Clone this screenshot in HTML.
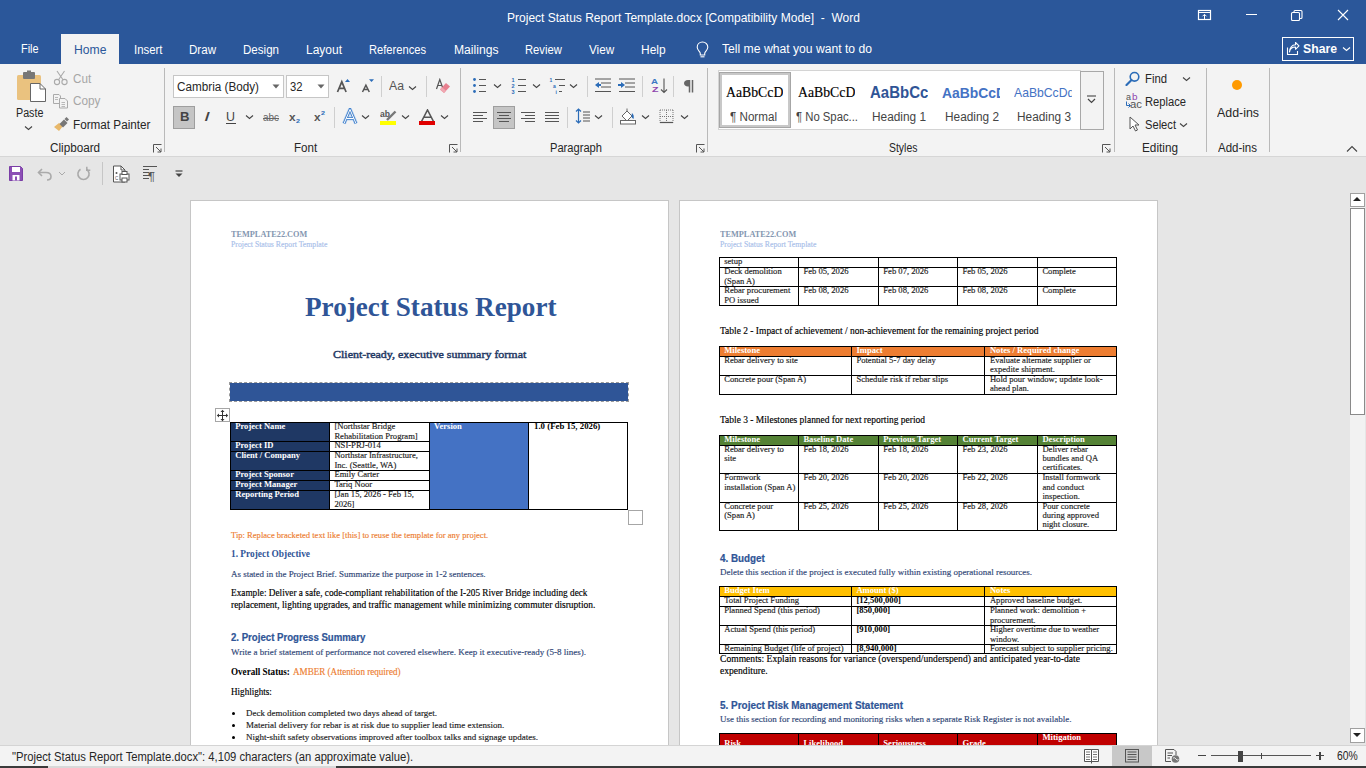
<!DOCTYPE html>
<html><head><meta charset="utf-8"><style>
html,body{margin:0;padding:0;width:1366px;height:768px;overflow:hidden;background:#e6e6e6;}
.t{position:absolute;white-space:nowrap;line-height:1;transform-origin:0 0;}
.r{position:absolute;}
</style></head><body>
<div class="r" style="left:0.00px;top:0.00px;width:1366.00px;height:64.00px;background:#2b579a;"></div>
<div class="t" id="t1" style="left:507.00px;top:11.72px;font-size:12.50px;font-family:'Liberation Sans', sans-serif;color:#ffffff;transform:scaleX(0.9617);">Project Status Report Template.docx [Compatibility Mode]&nbsp; -&nbsp; Word</div>
<svg class="r" style="left:1196.00px;top:8.00px;" width="17" height="14" viewBox="0 0 17 14"><rect x="2.5" y="2.5" width="12" height="9" fill="none" stroke="#fff" stroke-width="1.2"/><line x1="2.5" y1="4.5" x2="14.5" y2="4.5" stroke="#fff" stroke-width="1"/><path d="M8.5 11 V6.5 M6.5 8.3 L8.5 6.3 L10.5 8.3" fill="none" stroke="#fff" stroke-width="1"/></svg>
<div class="r" style="left:1246.00px;top:14.00px;width:10.50px;height:1.20px;background:#fff;"></div>
<svg class="r" style="left:1290.00px;top:9.00px;" width="14" height="13" viewBox="0 0 14 13"><rect x="1.5" y="3.5" width="8" height="8" fill="none" stroke="#fff" stroke-width="1.1" rx="1"/><path d="M4 3.5 V2.5 Q4 1.5 5 1.5 H11 Q12 1.5 12 2.5 V8.5 Q12 9.5 11 9.5 H9.5" fill="none" stroke="#fff" stroke-width="1.1"/></svg>
<svg class="r" style="left:1336.00px;top:8.00px;" width="14" height="14" viewBox="0 0 14 14"><path d="M2 2 L12 12 M12 2 L2 12" stroke="#fff" stroke-width="1.1"/></svg>
<div class="r" style="left:61.00px;top:34.00px;width:58.00px;height:30.00px;background:#f3f3f3;"></div>
<div class="t" id="t2" style="left:20.50px;top:42.62px;font-size:12.50px;font-family:'Liberation Sans', sans-serif;color:#ffffff;transform:scaleX(0.8732);">File</div>
<div class="t" id="t3" style="left:73.60px;top:43.52px;font-size:12.50px;font-family:'Liberation Sans', sans-serif;color:#2b579a;transform:scaleX(0.9717);">Home</div>
<div class="t" id="t4" style="left:133.50px;top:43.52px;font-size:12.50px;font-family:'Liberation Sans', sans-serif;color:#ffffff;transform:scaleX(0.9115);">Insert</div>
<div class="t" id="t5" style="left:189.00px;top:43.52px;font-size:12.50px;font-family:'Liberation Sans', sans-serif;color:#ffffff;transform:scaleX(0.9255);">Draw</div>
<div class="t" id="t6" style="left:243.00px;top:43.52px;font-size:12.50px;font-family:'Liberation Sans', sans-serif;color:#ffffff;transform:scaleX(0.9249);">Design</div>
<div class="t" id="t7" style="left:306.00px;top:43.52px;font-size:12.50px;font-family:'Liberation Sans', sans-serif;color:#ffffff;transform:scaleX(0.9592);">Layout</div>
<div class="t" id="t8" style="left:369.00px;top:43.52px;font-size:12.50px;font-family:'Liberation Sans', sans-serif;color:#ffffff;transform:scaleX(0.8915);">References</div>
<div class="t" id="t9" style="left:453.50px;top:43.52px;font-size:12.50px;font-family:'Liberation Sans', sans-serif;color:#ffffff;transform:scaleX(0.9704);">Mailings</div>
<div class="t" id="t10" style="left:525.20px;top:43.52px;font-size:12.50px;font-family:'Liberation Sans', sans-serif;color:#ffffff;transform:scaleX(0.8976);">Review</div>
<div class="t" id="t11" style="left:588.80px;top:43.52px;font-size:12.50px;font-family:'Liberation Sans', sans-serif;color:#ffffff;transform:scaleX(0.9377);">View</div>
<div class="t" id="t12" style="left:641.00px;top:43.52px;font-size:12.50px;font-family:'Liberation Sans', sans-serif;color:#ffffff;transform:scaleX(0.9565);">Help</div>
<svg class="r" style="left:694.00px;top:40.00px;" width="17" height="19" viewBox="0 0 17 19"><path d="M8.5 2 C5.2 2 3.2 4.5 3.2 7.2 C3.2 9.3 4.6 10.6 5.6 11.8 C6.1 12.4 6.3 13 6.3 13.8 V15 H10.7 V13.8 C10.7 13 10.9 12.4 11.4 11.8 C12.4 10.6 13.8 9.3 13.8 7.2 C13.8 4.5 11.8 2 8.5 2 Z" fill="none" stroke="#fff" stroke-width="1.1"/><path d="M6.5 16.8 H10.5" stroke="#fff" stroke-width="1.1"/></svg>
<div class="t" id="t13" style="left:722.00px;top:43.22px;font-size:12.50px;font-family:'Liberation Sans', sans-serif;color:#ffffff;transform:scaleX(0.9724);">Tell me what you want to do</div>
<div class="r" style="left:1282.00px;top:37.00px;width:72.00px;height:24.00px;border:1.3px solid #fff;box-sizing:border-box;"></div>
<svg class="r" style="left:1285.00px;top:41.00px;" width="16" height="16" viewBox="0 0 16 16"><path d="M2.5 6.5 V13.5 H12.5 V10" fill="none" stroke="#fff" stroke-width="1.1"/><path d="M4.5 11 C5 7.5 7.5 6 10.5 6 V8.3 L14 4.8 L10.5 1.5 V3.7 C7 3.9 4.8 6.5 4.5 11 Z" fill="none" stroke="#fff" stroke-width="1.1" stroke-linejoin="round"/></svg>
<div class="t" id="t14" style="left:1303.00px;top:43.16px;font-size:12.80px;font-family:'Liberation Sans', sans-serif;color:#ffffff;font-weight:700;transform:scaleX(0.9556);">Share</div>
<svg class="r" style="left:1342.00px;top:46.00px;" width="9" height="6" viewBox="0 0 9 6"><path d="M1 1.5 L4.5 4.5 L8 1.5" fill="none" stroke="#fff" stroke-width="1.1"/></svg>
<div class="r" style="left:0.00px;top:64.00px;width:1366.00px;height:92.00px;background:#f3f3f3;"></div>
<div class="r" style="left:0.00px;top:156.00px;width:1366.00px;height:1.00px;background:#d6d6d6;"></div>
<div class="r" style="left:164.20px;top:68.00px;width:1.00px;height:84.00px;background:#b9b9b9;"></div>
<div class="r" style="left:460.10px;top:68.00px;width:1.00px;height:84.00px;background:#b9b9b9;"></div>
<div class="r" style="left:707.00px;top:68.00px;width:1.00px;height:84.00px;background:#b9b9b9;"></div>
<div class="r" style="left:1114.10px;top:68.00px;width:1.00px;height:84.00px;background:#b9b9b9;"></div>
<div class="r" style="left:1206.10px;top:68.00px;width:1.00px;height:84.00px;background:#b9b9b9;"></div>
<div class="r" style="left:1268.90px;top:68.00px;width:1.00px;height:84.00px;background:#b9b9b9;"></div>
<div class="t" id="t15" style="left:49.50px;top:141.64px;font-size:12.00px;font-family:'Liberation Sans', sans-serif;color:#262626;transform:scaleX(0.9752);">Clipboard</div>
<div class="t" id="t16" style="left:293.75px;top:141.64px;font-size:12.00px;font-family:'Liberation Sans', sans-serif;color:#262626;transform:scaleX(0.9660);">Font</div>
<div class="t" id="t17" style="left:550.40px;top:141.64px;font-size:12.00px;font-family:'Liberation Sans', sans-serif;color:#262626;transform:scaleX(0.9278);">Paragraph</div>
<div class="t" id="t18" style="left:889.00px;top:141.64px;font-size:12.00px;font-family:'Liberation Sans', sans-serif;color:#262626;transform:scaleX(0.8688);">Styles</div>
<div class="t" id="t19" style="left:1142.00px;top:141.64px;font-size:12.00px;font-family:'Liberation Sans', sans-serif;color:#262626;transform:scaleX(0.9808);">Editing</div>
<div class="t" id="t20" style="left:1218.00px;top:141.64px;font-size:12.00px;font-family:'Liberation Sans', sans-serif;color:#262626;transform:scaleX(0.9585);">Add-ins</div>
<svg class="r" style="left:153.00px;top:144.00px;" width="9" height="9" viewBox="0 0 9 9"><path d="M0.5 8.5 V0.5 H8.5" fill="none" stroke="#555" stroke-width="1"/><path d="M3 3 L8 8 M8 4.5 V8 H4.5" fill="none" stroke="#555" stroke-width="1"/></svg>
<svg class="r" style="left:449.00px;top:144.00px;" width="9" height="9" viewBox="0 0 9 9"><path d="M0.5 8.5 V0.5 H8.5" fill="none" stroke="#555" stroke-width="1"/><path d="M3 3 L8 8 M8 4.5 V8 H4.5" fill="none" stroke="#555" stroke-width="1"/></svg>
<svg class="r" style="left:696.00px;top:144.00px;" width="9" height="9" viewBox="0 0 9 9"><path d="M0.5 8.5 V0.5 H8.5" fill="none" stroke="#555" stroke-width="1"/><path d="M3 3 L8 8 M8 4.5 V8 H4.5" fill="none" stroke="#555" stroke-width="1"/></svg>
<svg class="r" style="left:1102.00px;top:144.00px;" width="9" height="9" viewBox="0 0 9 9"><path d="M0.5 8.5 V0.5 H8.5" fill="none" stroke="#555" stroke-width="1"/><path d="M3 3 L8 8 M8 4.5 V8 H4.5" fill="none" stroke="#555" stroke-width="1"/></svg>
<svg class="r" style="left:1346.00px;top:145.00px;" width="12" height="8" viewBox="0 0 12 8"><path d="M1 6.5 L6 1.5 L11 6.5" fill="none" stroke="#444" stroke-width="1.1"/></svg>
<svg class="r" style="left:15.00px;top:70.00px;" width="32" height="33" viewBox="0 0 32 33"><rect x="2" y="5" width="24" height="25" rx="1.5" fill="#e8b86a" opacity="0.85"/><rect x="8" y="2" width="12" height="7" rx="1" fill="#777"/><rect x="12" y="0.5" width="4" height="3" fill="#777"/><path d="M15.5 13.5 H25 L30.5 19 V31.5 H15.5 Z" fill="#fff" stroke="#666" stroke-width="1"/><path d="M25 13.5 V19 H30.5" fill="none" stroke="#666" stroke-width="1"/></svg>
<div class="t" id="t21" style="left:15.60px;top:106.84px;font-size:12.00px;font-family:'Liberation Sans', sans-serif;color:#262626;transform:scaleX(0.8929);">Paste</div>
<svg class="r" style="left:24.00px;top:125.00px;" width="9" height="6" viewBox="0 0 9 6"><path d="M1 1.5 L4.5 4.5 L8 1.5" fill="none" stroke="#444" stroke-width="1.1"/></svg>
<svg class="r" style="left:53.00px;top:70.00px;" width="16" height="16" viewBox="0 0 16 16"><circle cx="4" cy="12" r="2.6" fill="none" stroke="#aaa" stroke-width="1.1"/><circle cx="11.5" cy="12" r="2.6" fill="none" stroke="#aaa" stroke-width="1.1"/><path d="M5.5 9.8 L11.5 1 M10 9.8 L4 1" stroke="#aaa" stroke-width="1.1"/></svg>
<div class="t" id="t22" style="left:72.50px;top:73.04px;font-size:12.00px;font-family:'Liberation Sans', sans-serif;color:#a6a6a6;transform:scaleX(0.9739);">Cut</div>
<svg class="r" style="left:52.00px;top:93.00px;" width="17" height="16" viewBox="0 0 17 16"><path d="M1.5 1.5 H7 L8.5 3 V10.5 H1.5 Z" fill="none" stroke="#aaa" stroke-width="1"/><path d="M7.5 5.5 H13 L15.5 8 V15 H7.5 Z" fill="#f3f3f3" stroke="#aaa" stroke-width="1"/><path d="M3 4.5 H6 M3 6.5 H6 M9.5 9.5 H13 M9.5 11.5 H13 M9.5 13.5 H13" stroke="#aaa" stroke-width="0.8"/></svg>
<div class="t" id="t23" style="left:72.50px;top:95.14px;font-size:12.00px;font-family:'Liberation Sans', sans-serif;color:#a6a6a6;transform:scaleX(0.9816);">Copy</div>
<svg class="r" style="left:52.00px;top:116.00px;" width="18" height="16" viewBox="0 0 18 16"><path d="M2 11 L7 15 L11 10 L7 7 Z" fill="#e8b86a"/><path d="M7.5 8 L12 3.5 L15.5 7 L11 11.5 Z" fill="#777"/><path d="M12.5 3 L14.5 1 L17 3.5 L15 5.5 Z" fill="#777"/></svg>
<div class="t" id="t24" style="left:72.50px;top:118.59px;font-size:12.00px;font-family:'Liberation Sans', sans-serif;color:#262626;transform:scaleX(0.9766);">Format Painter</div>
<div class="r" style="left:173.00px;top:75.00px;width:111.00px;height:23.00px;background:#fff;border:1px solid #c6c6c6;box-sizing:border-box;"></div>
<div class="t" id="t25" style="left:177.00px;top:80.59px;font-size:12.30px;font-family:'Liberation Sans', sans-serif;color:#262626;transform:scaleX(0.9523);">Cambria (Body)</div>
<svg class="r" style="left:272.00px;top:84.00px;" width="8" height="5" viewBox="0 0 8 5"><path d="M0.5 0.5 H7.5 L4 4.5 Z" fill="#666"/></svg>
<div class="r" style="left:286.00px;top:75.00px;width:43.00px;height:23.00px;background:#fff;border:1px solid #c6c6c6;box-sizing:border-box;"></div>
<div class="t" id="t26" style="left:289.50px;top:80.59px;font-size:12.30px;font-family:'Liberation Sans', sans-serif;color:#262626;transform:scaleX(0.9132);">32</div>
<svg class="r" style="left:317.00px;top:84.00px;" width="8" height="5" viewBox="0 0 8 5"><path d="M0.5 0.5 H7.5 L4 4.5 Z" fill="#666"/></svg>
<svg class="r" style="left:336.00px;top:77.00px;" width="16" height="17" viewBox="0 0 16 17"><path d="M1.5 15 L5.8 4.8 L10.1 15 M3.1 11.3 H8.5" fill="none" stroke="#555" stroke-width="1.7"/><path d="M9 5 L11.5 2 L14 5 Z" fill="#2b6cb8"/></svg>
<svg class="r" style="left:361.00px;top:77.00px;" width="15" height="17" viewBox="0 0 15 17"><path d="M1.5 15 L4.9 8.2 L8.3 15 M2.8 12.5 H7" fill="none" stroke="#555" stroke-width="1.5"/><path d="M8 2.2 H13 L10.5 5 Z" fill="#2b6cb8"/></svg>
<div class="r" style="left:381.00px;top:76.00px;width:1.00px;height:21.00px;background:#cfcfcf;"></div>
<div class="t" id="t27" style="left:389.00px;top:79.92px;font-size:12.50px;font-family:'Liberation Sans', sans-serif;color:#555;transform:scaleX(0.9806);">Aa</div>
<svg class="r" style="left:408.00px;top:85.00px;" width="9" height="6" viewBox="0 0 9 6"><path d="M1 1.5 L4.5 4.5 L8 1.5" fill="none" stroke="#444" stroke-width="1.1"/></svg>
<div class="r" style="left:426.00px;top:76.00px;width:1.00px;height:21.00px;background:#cfcfcf;"></div>
<svg class="r" style="left:435.00px;top:78.00px;" width="16" height="16" viewBox="0 0 16 16"><path d="M1.5 11 L4.8 1.5 L8.1 11 M2.7 7.5 H6.9" fill="none" stroke="#555" stroke-width="1.2"/><path d="M5 11.5 L11 5 L15 8.5 L9 15 Z" fill="#e8808f"/><path d="M5 11.5 L7 9.3 L11 12.8 L9 15 Z" fill="#f0a8b2"/></svg>
<div class="r" style="left:173.00px;top:106.00px;width:22.00px;height:23.00px;background:#c5c5c5;border:1px solid #9e9e9e;box-sizing:border-box;"></div>
<div class="t" id="t28" style="left:179.50px;top:111.42px;font-size:12.50px;font-family:'Liberation Sans', sans-serif;color:#444;font-weight:700;transform:scaleX(1.0519);">B</div>
<div class="t" id="t29" style="left:204.00px;top:111.42px;font-size:12.50px;font-family:'Liberation Sans', sans-serif;color:#444;transform:scaleX(1.7220);"><i>I</i></div>
<div class="t" id="t30" style="left:226.00px;top:110.84px;font-size:12.00px;font-family:'Liberation Sans', sans-serif;color:#444;transform:scaleX(1.0378);">U</div>
<div class="r" style="left:226.00px;top:123.00px;width:9.50px;height:1.00px;background:#444;"></div>
<svg class="r" style="left:245.00px;top:114.00px;" width="9" height="6" viewBox="0 0 9 6"><path d="M1 1.5 L4.5 4.5 L8 1.5" fill="none" stroke="#444" stroke-width="1.1"/></svg>
<div class="t" id="t31" style="left:263.00px;top:112.19px;font-size:11.00px;font-family:'Liberation Sans', sans-serif;color:#666;transform:scaleX(0.9014);">abc</div>
<div class="r" style="left:263.00px;top:117.50px;width:16.00px;height:1.00px;background:#666;"></div>
<div class="t" id="t32" style="left:289.20px;top:111.69px;font-size:11.00px;font-family:'Liberation Sans', sans-serif;color:#555;font-weight:700;transform:scaleX(1.0776);">x</div>
<div class="t" id="t33" style="left:296.00px;top:118.22px;font-size:6.00px;font-family:'Liberation Sans', sans-serif;color:#2b6cb8;font-weight:700;transform:scaleX(1.1963);">2</div>
<div class="t" id="t34" style="left:313.50px;top:111.69px;font-size:11.00px;font-family:'Liberation Sans', sans-serif;color:#555;font-weight:700;transform:scaleX(1.0776);">x</div>
<div class="t" id="t35" style="left:320.50px;top:110.22px;font-size:6.00px;font-family:'Liberation Sans', sans-serif;color:#2b6cb8;font-weight:700;transform:scaleX(1.1963);">2</div>
<div class="r" style="left:334.00px;top:107.00px;width:1.00px;height:21.00px;background:#cfcfcf;"></div>
<svg class="r" style="left:342.00px;top:108.00px;" width="16" height="17" viewBox="0 0 16 17"><path d="M2 15.5 L8 1.5 L14 15.5 M4.3 10.5 H11.7" fill="none" stroke="#b9d3f0" stroke-width="4"/><path d="M2 15.5 L8 1.5 L14 15.5 M4.3 10.5 H11.7" fill="none" stroke="#3d7dc9" stroke-width="2.6"/><path d="M2 15.5 L8 1.5 L14 15.5 M4.3 10.5 H11.7" fill="none" stroke="#fff" stroke-width="1"/></svg>
<svg class="r" style="left:361.00px;top:114.00px;" width="9" height="6" viewBox="0 0 9 6"><path d="M1 1.5 L4.5 4.5 L8 1.5" fill="none" stroke="#444" stroke-width="1.1"/></svg>
<div class="t" id="t36" style="left:380.00px;top:109.46px;font-size:9.50px;font-family:'Liberation Sans', sans-serif;color:#555;font-weight:700;transform:scaleX(0.9014);">ab</div>
<svg class="r" style="left:385.00px;top:109.00px;" width="12" height="12" viewBox="0 0 12 12"><path d="M2 11 L10.5 2.5" stroke="#777" stroke-width="2.4"/></svg>
<div class="r" style="left:380.00px;top:121.00px;width:16.00px;height:4.00px;background:#ffff00;"></div>
<svg class="r" style="left:401.00px;top:114.00px;" width="9" height="6" viewBox="0 0 9 6"><path d="M1 1.5 L4.5 4.5 L8 1.5" fill="none" stroke="#444" stroke-width="1.1"/></svg>
<svg class="r" style="left:420.00px;top:109.00px;" width="15" height="13" viewBox="0 0 15 13"><path d="M1.5 12.5 L7.5 1 L13.5 12.5 M3.8 8.3 H11.2" fill="none" stroke="#555" stroke-width="1.6"/></svg>
<div class="r" style="left:419.00px;top:121.00px;width:16.00px;height:4.00px;background:#e00000;"></div>
<svg class="r" style="left:440.00px;top:114.00px;" width="9" height="6" viewBox="0 0 9 6"><path d="M1 1.5 L4.5 4.5 L8 1.5" fill="none" stroke="#444" stroke-width="1.1"/></svg>
<svg class="r" style="left:472.00px;top:77.00px;" width="16" height="17" viewBox="0 0 16 17"><circle cx="2.5" cy="2.5" r="1.4" fill="#2b6cb8"/><circle cx="2.5" cy="8.5" r="1.4" fill="#2b6cb8"/><circle cx="2.5" cy="14.5" r="1.4" fill="#2b6cb8"/><path d="M7 2.5 H14 M7 8.5 H14 M7 14.5 H14" stroke="#555" stroke-width="1"/></svg>
<svg class="r" style="left:493.00px;top:83.00px;" width="9" height="6" viewBox="0 0 9 6"><path d="M1 1.5 L4.5 4.5 L8 1.5" fill="none" stroke="#444" stroke-width="1.1"/></svg>
<svg class="r" style="left:510.00px;top:77.00px;" width="17" height="17" viewBox="0 0 17 17"><text x="1.5" y="5" font-size="5.5" font-family="Liberation Sans, sans-serif" font-weight="700" fill="#2b6cb8">1</text><text x="1.5" y="11" font-size="5.5" font-family="Liberation Sans, sans-serif" font-weight="700" fill="#2b6cb8">2</text><text x="1.5" y="17" font-size="5.5" font-family="Liberation Sans, sans-serif" font-weight="700" fill="#2b6cb8">3</text><path d="M8 2.5 H16 M8 8.5 H16 M8 14.5 H16" stroke="#555" stroke-width="1"/></svg>
<svg class="r" style="left:531.50px;top:83.00px;" width="9" height="6" viewBox="0 0 9 6"><path d="M1 1.5 L4.5 4.5 L8 1.5" fill="none" stroke="#444" stroke-width="1.1"/></svg>
<svg class="r" style="left:549.00px;top:77.00px;" width="18" height="17" viewBox="0 0 18 17"><text x="0.5" y="5" font-size="5" font-family="Liberation Sans, sans-serif" font-weight="700" fill="#2b6cb8">1</text><text x="4" y="11" font-size="5" font-family="Liberation Sans, sans-serif" font-weight="700" fill="#2b6cb8">a</text><text x="6.5" y="17" font-size="5" font-family="Liberation Sans, sans-serif" font-weight="700" fill="#2b6cb8">i</text><path d="M6 2.5 H16 M10 8.5 H16 M10 14.5 H13" stroke="#555" stroke-width="1"/></svg>
<svg class="r" style="left:568.50px;top:83.00px;" width="9" height="6" viewBox="0 0 9 6"><path d="M1 1.5 L4.5 4.5 L8 1.5" fill="none" stroke="#444" stroke-width="1.1"/></svg>
<div class="r" style="left:587.00px;top:76.00px;width:1.00px;height:21.00px;background:#cfcfcf;"></div>
<svg class="r" style="left:594.00px;top:78.00px;" width="18" height="15" viewBox="0 0 18 15"><path d="M1 1 H17 M7 5 H17 M7 9 H17 M1 13.5 H17" stroke="#555" stroke-width="1"/><path d="M1 7 L5 4 V10 Z" fill="#2b6cb8"/><path d="M3 7 H7" stroke="#2b6cb8" stroke-width="2"/></svg>
<svg class="r" style="left:618.00px;top:78.00px;" width="18" height="15" viewBox="0 0 18 15"><path d="M1 1 H17 M7 5 H17 M7 9 H17 M1 13.5 H17" stroke="#555" stroke-width="1"/><path d="M7 7 L3 4 V10 Z" fill="#2b6cb8"/><path d="M0 7 H4" stroke="#2b6cb8" stroke-width="2"/></svg>
<div class="r" style="left:642.00px;top:76.00px;width:1.00px;height:21.00px;background:#cfcfcf;"></div>
<div class="t" id="t37" style="left:651.00px;top:78.23px;font-size:8.00px;font-family:'Liberation Sans', sans-serif;color:#3b78c4;font-weight:700;transform:scaleX(1.2108);">A</div>
<div class="t" id="t38" style="left:651.50px;top:86.23px;font-size:8.00px;font-family:'Liberation Sans', sans-serif;color:#8e44ad;font-weight:700;transform:scaleX(1.3291);">Z</div>
<svg class="r" style="left:660.00px;top:78.00px;" width="8" height="16" viewBox="0 0 8 16"><path d="M4 0.5 V14.5 M1 11.5 L4 14.5 L7 11.5" fill="none" stroke="#555" stroke-width="1.1"/></svg>
<div class="r" style="left:673.00px;top:76.00px;width:1.00px;height:21.00px;background:#cfcfcf;"></div>
<svg class="r" style="left:683.00px;top:79.00px;" width="12" height="14" viewBox="0 0 12 14"><path d="M6.5 1 V13.5 M9.5 1 V13.5" stroke="#666" stroke-width="1.5"/><path d="M10.5 1 H5 C2.5 1 1 2.6 1 4.3 C1 6 2.5 7.5 5 7.5 H6.5 V1 Z" fill="#666"/></svg>
<svg class="r" style="left:473.00px;top:112.00px;" width="16" height="12" viewBox="0 0 16 12"><rect x="0" y="0" width="14" height="1" fill="#555"/><rect x="0" y="3" width="10" height="1" fill="#555"/><rect x="0" y="6" width="14" height="1" fill="#555"/><rect x="0" y="9" width="10" height="1" fill="#555"/></svg>
<div class="r" style="left:493.00px;top:106.00px;width:22.00px;height:23.00px;background:#c5c5c5;border:1px solid #9e9e9e;box-sizing:border-box;"></div>
<svg class="r" style="left:497.00px;top:112.00px;" width="16" height="12" viewBox="0 0 16 12"><rect x="0" y="0" width="14" height="1" fill="#555"/><rect x="2" y="3" width="10" height="1" fill="#555"/><rect x="0" y="6" width="14" height="1" fill="#555"/><rect x="2" y="9" width="10" height="1" fill="#555"/></svg>
<svg class="r" style="left:521.00px;top:112.00px;" width="16" height="12" viewBox="0 0 16 12"><rect x="0" y="0" width="14" height="1" fill="#555"/><rect x="4" y="3" width="10" height="1" fill="#555"/><rect x="0" y="6" width="14" height="1" fill="#555"/><rect x="4" y="9" width="10" height="1" fill="#555"/></svg>
<svg class="r" style="left:545.00px;top:112.00px;" width="16" height="12" viewBox="0 0 16 12"><rect x="0" y="0" width="14" height="1" fill="#555"/><rect x="0" y="3" width="14" height="1" fill="#555"/><rect x="0" y="6" width="14" height="1" fill="#555"/><rect x="0" y="9" width="14" height="1" fill="#555"/></svg>
<div class="r" style="left:567.00px;top:107.00px;width:1.00px;height:21.00px;background:#cfcfcf;"></div>
<svg class="r" style="left:575.00px;top:108.00px;" width="16" height="16" viewBox="0 0 16 16"><path d="M3.5 1 V15 M1 3.5 L3.5 1 L6 3.5 M1 12.5 L3.5 15 L6 12.5" fill="none" stroke="#2b6cb8" stroke-width="1.2"/><path d="M8 4 H15 M8 7 H15 M8 10 H15 M8 13 H15" stroke="#555" stroke-width="1"/></svg>
<svg class="r" style="left:594.00px;top:114.00px;" width="9" height="6" viewBox="0 0 9 6"><path d="M1 1.5 L4.5 4.5 L8 1.5" fill="none" stroke="#444" stroke-width="1.1"/></svg>
<div class="r" style="left:612.00px;top:107.00px;width:1.00px;height:21.00px;background:#cfcfcf;"></div>
<svg class="r" style="left:619.00px;top:108.00px;" width="18" height="17" viewBox="0 0 18 17"><path d="M3 8 L8 3 L13 8 L8 13 Z" fill="#fff" stroke="#666" stroke-width="1"/><path d="M8 3 V0.5" stroke="#666"/><path d="M13 5 Q15.5 7 14.5 11 Q12.5 10 12.5 8 Z" fill="#2b6cb8"/><rect x="1.5" y="12.5" width="15" height="3.5" fill="#fff" stroke="#666" stroke-width="1"/></svg>
<svg class="r" style="left:640.50px;top:114.00px;" width="9" height="6" viewBox="0 0 9 6"><path d="M1 1.5 L4.5 4.5 L8 1.5" fill="none" stroke="#444" stroke-width="1.1"/></svg>
<svg class="r" style="left:659.00px;top:109.00px;" width="15" height="15" viewBox="0 0 15 15"><path d="M1 1 H14 M1 7.5 H14 M1 1 V13.5 M14 1 V13.5 M7.5 1 V13.5" stroke="#777" stroke-width="1" stroke-dasharray="1 1"/><path d="M1 13.5 H14" stroke="#555" stroke-width="1.2"/></svg>
<svg class="r" style="left:680.00px;top:114.00px;" width="9" height="6" viewBox="0 0 9 6"><path d="M1 1.5 L4.5 4.5 L8 1.5" fill="none" stroke="#444" stroke-width="1.1"/></svg>
<div class="r" style="left:717.50px;top:70.00px;width:363.00px;height:60.00px;background:#fff;border:1px solid #d4d4d4;box-sizing:border-box;"></div>
<div class="r" style="left:1080.00px;top:70.50px;width:24.00px;height:59.50px;background:#f3f3f3;border:1px solid #a8a8a8;box-sizing:border-box;"></div>
<svg class="r" style="left:1086.00px;top:95.00px;" width="11" height="9" viewBox="0 0 11 9"><path d="M1 1 H10" stroke="#444" stroke-width="1.1"/><path d="M2 4 L5.5 7.5 L9 4" fill="none" stroke="#444" stroke-width="1.2"/></svg>
<div class="r" style="left:719.00px;top:72.00px;width:72.00px;height:56.00px;background:#fff;border:3px solid #c8c8c8;box-sizing:border-box;outline:1px solid #a6a6a6;outline-offset:-1px;"></div>
<div class="r" style="left:719px;top:80px;width:72px;height:24px;overflow:hidden;"></div>
<div class="r" style="left:791px;top:80px;width:72px;height:24px;overflow:hidden;"></div>
<div class="r" style="left:863px;top:80px;width:72px;height:24px;overflow:hidden;"></div>
<div class="r" style="left:935px;top:80px;width:72px;height:24px;overflow:hidden;"></div>
<div class="r" style="left:1007px;top:80px;width:72px;height:24px;overflow:hidden;"></div>
<div class="r" style="left:725.8px;top:75px;width:57.5px;height:30px;overflow:hidden;">
<div class="t" id="t39" style="left:0.00px;top:11.38px;font-size:14.00px;font-family:'Liberation Serif', serif;color:#000;-webkit-text-stroke:0.15px #000;transform:scaleX(0.9827);">AaBbCcDd</div>
</div>
<div class="r" style="left:797.8px;top:75px;width:57.5px;height:30px;overflow:hidden;">
<div class="t" id="t40" style="left:0.00px;top:11.38px;font-size:14.00px;font-family:'Liberation Serif', serif;color:#000;-webkit-text-stroke:0.15px #000;transform:scaleX(0.9827);">AaBbCcDd</div>
</div>
<div class="r" style="left:869.5px;top:75px;width:58.5px;height:30px;overflow:hidden;">
<div class="t" id="t41" style="left:0.00px;top:8.61px;font-size:17.00px;font-family:'Liberation Sans', sans-serif;color:#2f5496;font-weight:700;transform:scaleX(0.8818);">AaBbCcDd</div>
</div>
<div class="r" style="left:941.5px;top:75px;width:58.5px;height:30px;overflow:hidden;">
<div class="t" id="t42" style="left:0.00px;top:9.60px;font-size:15.00px;font-family:'Liberation Sans', sans-serif;color:#4472c4;font-weight:700;transform:scaleX(0.9254);">AaBbCcDd</div>
</div>
<div class="r" style="left:1014px;top:75px;width:58px;height:30px;overflow:hidden;">
<div class="t" id="t43" style="left:0.00px;top:10.57px;font-size:13.50px;font-family:'Liberation Sans', sans-serif;color:#4472c4;transform:scaleX(0.9027);">AaBbCcDd</div>
</div>
<div class="t" id="t44" style="left:729.50px;top:110.84px;font-size:12.00px;font-family:'Liberation Sans', sans-serif;color:#444;transform:scaleX(0.9700);">&para; Normal</div>
<div class="t" id="t45" style="left:796.00px;top:110.84px;font-size:12.00px;font-family:'Liberation Sans', sans-serif;color:#444;transform:scaleX(0.9421);">&para; No Spac...</div>
<div class="t" id="t46" style="left:872.00px;top:110.84px;font-size:12.00px;font-family:'Liberation Sans', sans-serif;color:#444;transform:scaleX(0.9869);">Heading 1</div>
<div class="t" id="t47" style="left:944.50px;top:110.84px;font-size:12.00px;font-family:'Liberation Sans', sans-serif;color:#444;transform:scaleX(0.9869);">Heading 2</div>
<div class="t" id="t48" style="left:1016.50px;top:110.84px;font-size:12.00px;font-family:'Liberation Sans', sans-serif;color:#444;transform:scaleX(0.9869);">Heading 3</div>
<svg class="r" style="left:1125.00px;top:71.00px;" width="16" height="15" viewBox="0 0 16 15"><circle cx="9.5" cy="5.8" r="4.3" fill="none" stroke="#2b6cb8" stroke-width="1.6"/><path d="M6.5 9 L1.5 14" stroke="#2b6cb8" stroke-width="2.2" stroke-linecap="round"/></svg>
<div class="t" id="t49" style="left:1145.00px;top:73.04px;font-size:12.00px;font-family:'Liberation Sans', sans-serif;color:#262626;transform:scaleX(0.9424);">Find</div>
<svg class="r" style="left:1181.50px;top:75.50px;" width="9" height="6" viewBox="0 0 9 6"><path d="M1 1.5 L4.5 4.5 L8 1.5" fill="none" stroke="#444" stroke-width="1.1"/></svg>
<div class="t" id="t50" style="left:1126.00px;top:92.46px;font-size:9.50px;font-family:'Liberation Sans', sans-serif;color:#555;transform:scaleX(0.9440);">a</div>
<div class="t" id="t51" style="left:1131.50px;top:92.46px;font-size:9.50px;font-family:'Liberation Sans', sans-serif;color:#8e44ad;transform:scaleX(1.0383);">b</div>
<div class="t" id="t52" style="left:1130.00px;top:100.03px;font-size:10.00px;font-family:'Liberation Sans', sans-serif;color:#555;transform:scaleX(1.1361);">ac</div>
<svg class="r" style="left:1125.00px;top:101.00px;" width="6" height="7" viewBox="0 0 6 7"><path d="M1.5 0.5 V4.5 H5 M3.5 2.5 L5.5 4.5 L3.5 6.5" fill="none" stroke="#2b6cb8" stroke-width="1"/></svg>
<div class="t" id="t53" style="left:1145.00px;top:96.34px;font-size:12.00px;font-family:'Liberation Sans', sans-serif;color:#262626;transform:scaleX(0.9312);">Replace</div>
<svg class="r" style="left:1129.00px;top:116.00px;" width="11" height="16" viewBox="0 0 11 16"><path d="M1 1 V13 L4 10 L6.5 15 L8.5 14 L6 9 H10 Z" fill="#fff" stroke="#555" stroke-width="1" stroke-linejoin="round"/></svg>
<div class="t" id="t54" style="left:1145.00px;top:118.84px;font-size:12.00px;font-family:'Liberation Sans', sans-serif;color:#262626;transform:scaleX(0.9293);">Select</div>
<svg class="r" style="left:1178.50px;top:121.50px;" width="9" height="6" viewBox="0 0 9 6"><path d="M1 1.5 L4.5 4.5 L8 1.5" fill="none" stroke="#444" stroke-width="1.1"/></svg>
<div class="r" style="left:1232px;top:80.3px;width:10px;height:10px;border-radius:50%;background:#ff9a00;"></div>
<div class="t" id="t55" style="left:1217.00px;top:107.22px;font-size:12.50px;font-family:'Liberation Sans', sans-serif;color:#262626;transform:scaleX(0.9908);">Add-ins</div>
<svg class="r" style="left:8.00px;top:165.00px;" width="16" height="17" viewBox="0 0 16 17"><path d="M1.5 1.5 H12.5 L14.5 3.5 V15.5 H1.5 Z" fill="#8c4fb5" stroke="#7a3ea6" stroke-width="1"/><rect x="4" y="2" width="8" height="5" fill="#fff"/><rect x="4.5" y="10" width="7" height="5.5" fill="#fff"/><rect x="7" y="11.5" width="2" height="4" fill="#8c4fb5"/></svg>
<svg class="r" style="left:37.00px;top:167.00px;" width="16" height="14" viewBox="0 0 16 14"><path d="M5 2 L1.5 5.5 L5 9" fill="none" stroke="#aaa" stroke-width="1.6"/><path d="M2 5.5 H9 Q14 5.5 14 9.5 Q14 13 10 13" fill="none" stroke="#aaa" stroke-width="1.6"/></svg>
<svg class="r" style="left:58.00px;top:171.00px;" width="8" height="5" viewBox="0 0 8 5"><path d="M1 1 L4 4 L7 1" fill="none" stroke="#aaa" stroke-width="1"/></svg>
<svg class="r" style="left:76.00px;top:166.00px;" width="15" height="15" viewBox="0 0 15 15"><path d="M4.5 3.2 A5.6 5.6 0 1 0 10.5 3.2" fill="none" stroke="#aaa" stroke-width="1.6"/><path d="M10.8 0.8 V4.3 H14.3" fill="none" stroke="#aaa" stroke-width="1.5"/></svg>
<div class="r" style="left:102.00px;top:162.00px;width:1.00px;height:23.00px;background:#c6c6c6;"></div>
<svg class="r" style="left:112.00px;top:165.00px;" width="18" height="18" viewBox="0 0 18 18"><path d="M1.5 1 H9 L13 5 V17 H1.5 Z" fill="#fff" stroke="#555" stroke-width="1"/><path d="M9 1 V5 H13" fill="none" stroke="#555"/><circle cx="4.5" cy="8" r="1" fill="#555"/><text x="3" y="14.5" font-size="4.5" font-family="Liberation Sans, sans-serif" fill="#555">C</text><rect x="8" y="9" width="9" height="6" fill="#fff" stroke="#555"/><rect x="10" y="6.5" width="5" height="3" fill="#fff" stroke="#555"/><rect x="10" y="13" width="5" height="4" fill="#fff" stroke="#555"/></svg>
<svg class="r" style="left:142.00px;top:165.00px;" width="16" height="17" viewBox="0 0 16 17"><path d="M1 1.5 H15 M1 4.5 H7 M1 7.5 H7 M1 10.5 H7 M1 13.5 H7" stroke="#555" stroke-width="1"/><text x="6" y="15.5" font-size="13" font-family="Liberation Sans, sans-serif" fill="#555">&para;</text></svg>
<svg class="r" style="left:175.00px;top:170.00px;" width="8" height="8" viewBox="0 0 8 8"><path d="M0.5 1 H7.5" stroke="#444" stroke-width="1.2"/><path d="M0.5 3.5 H7.5 L4 7 Z" fill="#444"/></svg>
<div class="r" style="left:1350.00px;top:192.50px;width:15.00px;height:550.00px;background:#f2f2f2;"></div>
<div class="r" style="left:1350.00px;top:192.50px;width:14.50px;height:14.30px;background:#fff;border:1px solid #a0a0a0;box-sizing:border-box;"></div>
<svg class="r" style="left:1352.00px;top:196.00px;" width="10" height="6" viewBox="0 0 10 6"><path d="M1 5 L5 1 L9 5 Z" fill="#222"/></svg>
<div class="r" style="left:1350.00px;top:207.50px;width:15.00px;height:207.50px;background:#fff;border:1px solid #8a8a8a;box-sizing:border-box;"></div>
<div class="r" style="left:1350.00px;top:728.00px;width:14.50px;height:14.50px;background:#fff;border:1px solid #a0a0a0;box-sizing:border-box;"></div>
<svg class="r" style="left:1352.00px;top:732.00px;" width="10" height="6" viewBox="0 0 10 6"><path d="M1 1 L5 5 L9 1 Z" fill="#222"/></svg>
<div class="r" style="left:190.00px;top:200.00px;width:479.00px;height:545.00px;background:#fff;border:1px solid #c6c6c6;border-bottom:none;box-sizing:border-box;"></div>
<div class="r" style="left:679.00px;top:200.00px;width:479.00px;height:545.00px;background:#fff;border:1px solid #c6c6c6;border-bottom:none;box-sizing:border-box;"></div>
<div class="t" id="t56" style="left:231.00px;top:230.20px;font-size:9.20px;font-family:'Liberation Serif', serif;color:#8496b0;font-weight:700;transform:scaleX(0.8995);">TEMPLATE22.COM</div>
<div class="t" id="t57" style="left:231.00px;top:240.57px;font-size:7.80px;font-family:'Liberation Serif', serif;color:#a8c0ea;-webkit-text-stroke:0.15px #a8c0ea;transform:scaleX(0.9940);">Project Status Report Template</div>
<div class="t" id="t58" style="left:720.00px;top:230.20px;font-size:9.20px;font-family:'Liberation Serif', serif;color:#8496b0;font-weight:700;transform:scaleX(0.8995);">TEMPLATE22.COM</div>
<div class="t" id="t59" style="left:720.00px;top:240.57px;font-size:7.80px;font-family:'Liberation Serif', serif;color:#a8c0ea;-webkit-text-stroke:0.15px #a8c0ea;transform:scaleX(0.9940);">Project Status Report Template</div>
<div class="t" id="t60" style="left:304.50px;top:294.19px;font-size:27.00px;font-family:'Liberation Serif', serif;color:#2f5597;font-weight:700;transform:scaleX(1.0063);">Project Status Report</div>
<div class="t" id="t61" style="left:333.00px;top:348.65px;font-size:11.40px;font-family:'Liberation Serif', serif;color:#1f3864;-webkit-text-stroke:0.15px #1f3864;transform:scaleX(1.0506);-webkit-text-stroke:0.45px #1f3864;">Client-ready, executive summary format</div>
<div class="r" style="left:230.00px;top:382.70px;width:397.50px;height:18.70px;background:#2f5597;outline:1px dashed #9a9a9a;outline-offset:0px;"></div>
<div class="r" style="left:215.00px;top:407.50px;width:14.50px;height:14.00px;background:#fff;border:1px solid #a6a6a6;box-sizing:border-box;"></div>
<svg class="r" style="left:216.00px;top:408.50px;" width="13" height="13" viewBox="0 0 13 13"><path d="M6.5 2 V11 M2 6.5 H11" stroke="#333" stroke-width="1"/><path d="M4.5 3 L6.5 0.8 L8.5 3 Z M4.5 10 L6.5 12.2 L8.5 10 Z M3 4.5 L0.8 6.5 L3 8.5 Z M10 4.5 L12.2 6.5 L10 8.5 Z" fill="#333"/></svg>
<div class="r" style="left:230.00px;top:422.00px;width:99.50px;height:87.50px;background:#1f3864;"></div>
<div class="r" style="left:429.70px;top:422.00px;width:98.60px;height:87.50px;background:#4472c4;"></div>
<div class="r" style="left:230.00px;top:421.70px;width:398.00px;height:1.00px;background:#000;"></div>
<div class="r" style="left:230.00px;top:440.80px;width:398.00px;height:1.00px;background:#000;"></div>
<div class="r" style="left:230.00px;top:450.80px;width:398.00px;height:1.00px;background:#000;"></div>
<div class="r" style="left:230.00px;top:469.80px;width:398.00px;height:1.00px;background:#000;"></div>
<div class="r" style="left:230.00px;top:479.80px;width:398.00px;height:1.00px;background:#000;"></div>
<div class="r" style="left:230.00px;top:489.80px;width:398.00px;height:1.00px;background:#000;"></div>
<div class="r" style="left:230.00px;top:508.90px;width:398.00px;height:1.00px;background:#000;"></div>
<div class="r" style="left:229.80px;top:422.00px;width:1.00px;height:87.80px;background:#000;"></div>
<div class="r" style="left:627.00px;top:422.00px;width:1.00px;height:87.80px;background:#000;"></div>
<div class="r" style="left:429.20px;top:422.00px;width:1.00px;height:87.80px;background:#000;"></div>
<div class="r" style="left:527.80px;top:422.00px;width:1.00px;height:87.80px;background:#000;"></div>
<div class="r" style="left:329.00px;top:422.00px;width:1.00px;height:87.80px;background:#000;"></div>
<div class="r" style="left:430.20px;top:422.70px;width:97.60px;height:86.30px;background:#4472c4;"></div>
<div class="r" style="left:528.80px;top:422.70px;width:98.20px;height:86.30px;background:#fff;"></div>
<div class="t" id="t62" style="left:235.20px;top:421.90px;font-size:8.60px;font-family:'Liberation Serif', serif;color:#fff;font-weight:700;">Project Name</div>
<div class="t" id="t63" style="left:334.40px;top:421.90px;font-size:8.60px;font-family:'Liberation Serif', serif;color:#222;-webkit-text-stroke:0.15px #222;">[Northstar Bridge</div>
<div class="t" id="t64" style="left:334.40px;top:431.50px;font-size:8.60px;font-family:'Liberation Serif', serif;color:#222;-webkit-text-stroke:0.15px #222;">Rehabilitation Program]</div>
<div class="t" id="t65" style="left:235.20px;top:441.00px;font-size:8.60px;font-family:'Liberation Serif', serif;color:#fff;font-weight:700;">Project ID</div>
<div class="t" id="t66" style="left:334.40px;top:441.00px;font-size:8.60px;font-family:'Liberation Serif', serif;color:#222;-webkit-text-stroke:0.15px #222;">NSI-PRJ-014</div>
<div class="t" id="t67" style="left:235.20px;top:451.00px;font-size:8.60px;font-family:'Liberation Serif', serif;color:#fff;font-weight:700;">Client / Company</div>
<div class="t" id="t68" style="left:334.40px;top:451.00px;font-size:8.60px;font-family:'Liberation Serif', serif;color:#222;-webkit-text-stroke:0.15px #222;">Northstar Infrastructure,</div>
<div class="t" id="t69" style="left:334.40px;top:460.60px;font-size:8.60px;font-family:'Liberation Serif', serif;color:#222;-webkit-text-stroke:0.15px #222;">Inc. (Seattle, WA)</div>
<div class="t" id="t70" style="left:235.20px;top:470.00px;font-size:8.60px;font-family:'Liberation Serif', serif;color:#fff;font-weight:700;">Project Sponsor</div>
<div class="t" id="t71" style="left:334.40px;top:470.00px;font-size:8.60px;font-family:'Liberation Serif', serif;color:#222;-webkit-text-stroke:0.15px #222;">Emily Carter</div>
<div class="t" id="t72" style="left:235.20px;top:480.00px;font-size:8.60px;font-family:'Liberation Serif', serif;color:#fff;font-weight:700;">Project Manager</div>
<div class="t" id="t73" style="left:334.40px;top:480.00px;font-size:8.60px;font-family:'Liberation Serif', serif;color:#222;-webkit-text-stroke:0.15px #222;">Tariq Noor</div>
<div class="t" id="t74" style="left:235.20px;top:490.00px;font-size:8.60px;font-family:'Liberation Serif', serif;color:#fff;font-weight:700;">Reporting Period</div>
<div class="t" id="t75" style="left:334.40px;top:490.00px;font-size:8.60px;font-family:'Liberation Serif', serif;color:#222;-webkit-text-stroke:0.15px #222;">[Jan 15, 2026 - Feb 15,</div>
<div class="t" id="t76" style="left:334.40px;top:499.60px;font-size:8.60px;font-family:'Liberation Serif', serif;color:#222;-webkit-text-stroke:0.15px #222;">2026]</div>
<div class="t" id="t77" style="left:434.00px;top:421.90px;font-size:8.60px;font-family:'Liberation Serif', serif;color:#fff;font-weight:700;">Version</div>
<div class="t" id="t78" style="left:533.50px;top:421.90px;font-size:8.60px;font-family:'Liberation Serif', serif;color:#000;font-weight:700;transform:scaleX(1.0249);">1.0 (Feb 15, 2026)</div>
<div class="r" style="left:628.40px;top:510.00px;width:14.60px;height:14.60px;background:#fff;border:1px solid #a6a6a6;box-sizing:border-box;"></div>
<div class="t" id="t79" style="left:231.00px;top:530.90px;font-size:8.60px;font-family:'Liberation Serif', serif;color:#ed7d31;-webkit-text-stroke:0.15px #ed7d31;transform:scaleX(0.9964);">Tip: Replace bracketed text like [this] to reuse the template for any project.</div>
<div class="t" id="t80" style="left:231.00px;top:549.93px;font-size:9.40px;font-family:'Liberation Serif', serif;color:#2f5597;font-weight:700;transform:scaleX(0.9972);">1. Project Objective</div>
<div class="t" id="t81" style="left:231.00px;top:570.45px;font-size:8.90px;font-family:'Liberation Serif', serif;color:#2f4676;-webkit-text-stroke:0.15px #2f4676;transform:scaleX(1.0078);">As stated in the Project Brief. Summarize the purpose in 1-2 sentences.</div>
<div class="t" id="t82" style="left:231.00px;top:589.01px;font-size:9.30px;font-family:'Liberation Serif', serif;color:#000;-webkit-text-stroke:0.15px #000;transform:scaleX(0.9956);">Example: Deliver a safe, code-compliant rehabilitation of the I-205 River Bridge including deck</div>
<div class="t" id="t83" style="left:231.00px;top:600.71px;font-size:9.30px;font-family:'Liberation Serif', serif;color:#000;-webkit-text-stroke:0.15px #000;transform:scaleX(1.0173);">replacement, lighting upgrades, and traffic management while minimizing commuter disruption.</div>
<div class="t" id="t84" style="left:231.00px;top:633.43px;font-size:10.00px;font-family:'Liberation Sans', sans-serif;color:#2f5597;font-weight:700;transform:scaleX(0.9626);-webkit-text-stroke:0.2px #2f5597;">2. Project Progress Summary</div>
<div class="t" id="t85" style="left:231.00px;top:648.35px;font-size:8.90px;font-family:'Liberation Serif', serif;color:#2f4676;-webkit-text-stroke:0.15px #2f4676;transform:scaleX(1.0149);">Write a brief statement of performance not covered elsewhere. Keep it executive-ready (5-8 lines).</div>
<div class="t" id="t86" style="left:231.00px;top:667.71px;font-size:9.30px;font-family:'Liberation Serif', serif;color:#000;font-weight:700;transform:scaleX(0.9772);">Overall Status:</div>
<div class="t" id="t87" style="left:292.50px;top:667.71px;font-size:9.30px;font-family:'Liberation Serif', serif;color:#ed7d31;-webkit-text-stroke:0.15px #ed7d31;transform:scaleX(0.9773);">AMBER (Attention required)</div>
<div class="t" id="t88" style="left:231.00px;top:687.81px;font-size:9.30px;font-family:'Liberation Serif', serif;color:#000;-webkit-text-stroke:0.15px #000;transform:scaleX(0.9774);">Highlights:</div>
<div class="r" style="left:231.5px;top:711.80px;width:3px;height:3px;border-radius:50%;background:#000;"></div>
<div class="t" id="t89" style="left:245.80px;top:708.95px;font-size:8.90px;font-family:'Liberation Serif', serif;color:#222;-webkit-text-stroke:0.15px #222;transform:scaleX(1.0068);">Deck demolition completed two days ahead of target.</div>
<div class="r" style="left:231.5px;top:724.30px;width:3px;height:3px;border-radius:50%;background:#000;"></div>
<div class="t" id="t90" style="left:245.80px;top:721.45px;font-size:8.90px;font-family:'Liberation Serif', serif;color:#222;-webkit-text-stroke:0.15px #222;transform:scaleX(1.0122);">Material delivery for rebar is at risk due to supplier lead time extension.</div>
<div class="r" style="left:231.5px;top:736.00px;width:3px;height:3px;border-radius:50%;background:#000;"></div>
<div class="t" id="t91" style="left:245.80px;top:733.15px;font-size:8.90px;font-family:'Liberation Serif', serif;color:#222;-webkit-text-stroke:0.15px #222;transform:scaleX(1.0122);">Night-shift safety observations improved after toolbox talks and signage updates.</div>
<div class="r" style="left:718.70px;top:256.70px;width:398.50px;height:1.00px;background:#000;"></div>
<div class="r" style="left:718.70px;top:266.90px;width:398.50px;height:1.00px;background:#000;"></div>
<div class="r" style="left:718.70px;top:286.10px;width:398.50px;height:1.00px;background:#000;"></div>
<div class="r" style="left:718.70px;top:304.50px;width:398.50px;height:1.00px;background:#000;"></div>
<div class="r" style="left:718.70px;top:256.70px;width:1.00px;height:48.80px;background:#000;"></div>
<div class="r" style="left:797.90px;top:256.70px;width:1.00px;height:48.80px;background:#000;"></div>
<div class="r" style="left:877.80px;top:256.70px;width:1.00px;height:48.80px;background:#000;"></div>
<div class="r" style="left:957.00px;top:256.70px;width:1.00px;height:48.80px;background:#000;"></div>
<div class="r" style="left:1036.90px;top:256.70px;width:1.00px;height:48.80px;background:#000;"></div>
<div class="r" style="left:1116.20px;top:256.70px;width:1.00px;height:48.80px;background:#000;"></div>
<div class="t" id="t92" style="left:724.20px;top:256.50px;font-size:8.60px;font-family:'Liberation Serif', serif;color:#222;-webkit-text-stroke:0.15px #222;">setup</div>
<div class="t" id="t93" style="left:724.20px;top:266.90px;font-size:8.60px;font-family:'Liberation Serif', serif;color:#222;-webkit-text-stroke:0.15px #222;">Deck demolition</div>
<div class="t" id="t94" style="left:724.20px;top:276.60px;font-size:8.60px;font-family:'Liberation Serif', serif;color:#222;-webkit-text-stroke:0.15px #222;">(Span A)</div>
<div class="t" id="t95" style="left:803.40px;top:266.90px;font-size:8.60px;font-family:'Liberation Serif', serif;color:#222;-webkit-text-stroke:0.15px #222;">Feb 05, 2026</div>
<div class="t" id="t96" style="left:883.30px;top:266.90px;font-size:8.60px;font-family:'Liberation Serif', serif;color:#222;-webkit-text-stroke:0.15px #222;">Feb 07, 2026</div>
<div class="t" id="t97" style="left:962.50px;top:266.90px;font-size:8.60px;font-family:'Liberation Serif', serif;color:#222;-webkit-text-stroke:0.15px #222;">Feb 05, 2026</div>
<div class="t" id="t98" style="left:1042.40px;top:266.90px;font-size:8.60px;font-family:'Liberation Serif', serif;color:#222;-webkit-text-stroke:0.15px #222;">Complete</div>
<div class="t" id="t99" style="left:724.20px;top:286.10px;font-size:8.60px;font-family:'Liberation Serif', serif;color:#222;-webkit-text-stroke:0.15px #222;">Rebar procurement</div>
<div class="t" id="t100" style="left:724.20px;top:295.80px;font-size:8.60px;font-family:'Liberation Serif', serif;color:#222;-webkit-text-stroke:0.15px #222;">PO issued</div>
<div class="t" id="t101" style="left:803.40px;top:286.10px;font-size:8.60px;font-family:'Liberation Serif', serif;color:#222;-webkit-text-stroke:0.15px #222;">Feb 08, 2026</div>
<div class="t" id="t102" style="left:883.30px;top:286.10px;font-size:8.60px;font-family:'Liberation Serif', serif;color:#222;-webkit-text-stroke:0.15px #222;">Feb 08, 2026</div>
<div class="t" id="t103" style="left:962.50px;top:286.10px;font-size:8.60px;font-family:'Liberation Serif', serif;color:#222;-webkit-text-stroke:0.15px #222;">Feb 08, 2026</div>
<div class="t" id="t104" style="left:1042.40px;top:286.10px;font-size:8.60px;font-family:'Liberation Serif', serif;color:#222;-webkit-text-stroke:0.15px #222;">Complete</div>
<div class="t" id="t105" style="left:720.00px;top:326.81px;font-size:9.30px;font-family:'Liberation Serif', serif;color:#000;-webkit-text-stroke:0.15px #000;transform:scaleX(1.0181);">Table 2 - Impact of achievement / non-achievement for the remaining project period</div>
<div class="r" style="left:719.20px;top:346.50px;width:397.50px;height:9.70px;background:#ed7d31;"></div>
<div class="r" style="left:718.70px;top:346.00px;width:398.50px;height:1.00px;background:#000;"></div>
<div class="r" style="left:718.70px;top:355.70px;width:398.50px;height:1.00px;background:#000;"></div>
<div class="r" style="left:718.70px;top:374.70px;width:398.50px;height:1.00px;background:#000;"></div>
<div class="r" style="left:718.70px;top:393.80px;width:398.50px;height:1.00px;background:#000;"></div>
<div class="r" style="left:718.70px;top:346.00px;width:1.00px;height:48.80px;background:#000;"></div>
<div class="r" style="left:850.90px;top:346.00px;width:1.00px;height:48.80px;background:#000;"></div>
<div class="r" style="left:984.40px;top:346.00px;width:1.00px;height:48.80px;background:#000;"></div>
<div class="r" style="left:1116.20px;top:346.00px;width:1.00px;height:48.80px;background:#000;"></div>
<div class="t" id="t106" style="left:724.20px;top:345.70px;font-size:8.60px;font-family:'Liberation Serif', serif;color:#fff;font-weight:700;">Milestone</div>
<div class="t" id="t107" style="left:856.40px;top:345.70px;font-size:8.60px;font-family:'Liberation Serif', serif;color:#fff;font-weight:700;">Impact</div>
<div class="t" id="t108" style="left:989.90px;top:345.70px;font-size:8.60px;font-family:'Liberation Serif', serif;color:#fff;font-weight:700;">Notes / Required change</div>
<div class="t" id="t109" style="left:724.20px;top:355.70px;font-size:8.60px;font-family:'Liberation Serif', serif;color:#222;-webkit-text-stroke:0.15px #222;">Rebar delivery to site</div>
<div class="t" id="t110" style="left:856.40px;top:355.70px;font-size:8.60px;font-family:'Liberation Serif', serif;color:#222;-webkit-text-stroke:0.15px #222;">Potential 5-7 day delay</div>
<div class="t" id="t111" style="left:989.90px;top:355.70px;font-size:8.60px;font-family:'Liberation Serif', serif;color:#222;-webkit-text-stroke:0.15px #222;">Evaluate alternate supplier or</div>
<div class="t" id="t112" style="left:989.90px;top:365.40px;font-size:8.60px;font-family:'Liberation Serif', serif;color:#222;-webkit-text-stroke:0.15px #222;">expedite shipment.</div>
<div class="t" id="t113" style="left:724.20px;top:374.70px;font-size:8.60px;font-family:'Liberation Serif', serif;color:#222;-webkit-text-stroke:0.15px #222;">Concrete pour (Span A)</div>
<div class="t" id="t114" style="left:856.40px;top:374.70px;font-size:8.60px;font-family:'Liberation Serif', serif;color:#222;-webkit-text-stroke:0.15px #222;">Schedule risk if rebar slips</div>
<div class="t" id="t115" style="left:989.90px;top:374.70px;font-size:8.60px;font-family:'Liberation Serif', serif;color:#222;-webkit-text-stroke:0.15px #222;">Hold pour window; update look-</div>
<div class="t" id="t116" style="left:989.90px;top:384.40px;font-size:8.60px;font-family:'Liberation Serif', serif;color:#222;-webkit-text-stroke:0.15px #222;">ahead plan.</div>
<div class="t" id="t117" style="left:720.00px;top:416.41px;font-size:9.30px;font-family:'Liberation Serif', serif;color:#000;-webkit-text-stroke:0.15px #000;transform:scaleX(1.0160);">Table 3 - Milestones planned for next reporting period</div>
<div class="r" style="left:719.20px;top:435.40px;width:397.50px;height:9.70px;background:#548235;"></div>
<div class="r" style="left:718.70px;top:434.90px;width:398.50px;height:1.00px;background:#000;"></div>
<div class="r" style="left:718.70px;top:444.60px;width:398.50px;height:1.00px;background:#000;"></div>
<div class="r" style="left:718.70px;top:473.30px;width:398.50px;height:1.00px;background:#000;"></div>
<div class="r" style="left:718.70px;top:501.60px;width:398.50px;height:1.00px;background:#000;"></div>
<div class="r" style="left:718.70px;top:529.60px;width:398.50px;height:1.00px;background:#000;"></div>
<div class="r" style="left:718.70px;top:434.90px;width:1.00px;height:95.70px;background:#000;"></div>
<div class="r" style="left:797.90px;top:434.90px;width:1.00px;height:95.70px;background:#000;"></div>
<div class="r" style="left:877.80px;top:434.90px;width:1.00px;height:95.70px;background:#000;"></div>
<div class="r" style="left:957.00px;top:434.90px;width:1.00px;height:95.70px;background:#000;"></div>
<div class="r" style="left:1036.90px;top:434.90px;width:1.00px;height:95.70px;background:#000;"></div>
<div class="r" style="left:1116.20px;top:434.90px;width:1.00px;height:95.70px;background:#000;"></div>
<div class="t" id="t118" style="left:724.20px;top:434.60px;font-size:8.60px;font-family:'Liberation Serif', serif;color:#fff;font-weight:700;">Milestone</div>
<div class="t" id="t119" style="left:803.40px;top:434.60px;font-size:8.60px;font-family:'Liberation Serif', serif;color:#fff;font-weight:700;">Baseline Date</div>
<div class="t" id="t120" style="left:883.30px;top:434.60px;font-size:8.60px;font-family:'Liberation Serif', serif;color:#fff;font-weight:700;">Previous Target</div>
<div class="t" id="t121" style="left:962.50px;top:434.60px;font-size:8.60px;font-family:'Liberation Serif', serif;color:#fff;font-weight:700;">Current Target</div>
<div class="t" id="t122" style="left:1042.40px;top:434.60px;font-size:8.60px;font-family:'Liberation Serif', serif;color:#fff;font-weight:700;">Description</div>
<div class="t" id="t123" style="left:724.20px;top:444.60px;font-size:8.60px;font-family:'Liberation Serif', serif;color:#222;-webkit-text-stroke:0.15px #222;">Rebar delivery to</div>
<div class="t" id="t124" style="left:724.20px;top:453.80px;font-size:8.60px;font-family:'Liberation Serif', serif;color:#222;-webkit-text-stroke:0.15px #222;">site</div>
<div class="t" id="t125" style="left:803.40px;top:444.60px;font-size:8.60px;font-family:'Liberation Serif', serif;color:#222;-webkit-text-stroke:0.15px #222;">Feb 18, 2026</div>
<div class="t" id="t126" style="left:883.30px;top:444.60px;font-size:8.60px;font-family:'Liberation Serif', serif;color:#222;-webkit-text-stroke:0.15px #222;">Feb 18, 2026</div>
<div class="t" id="t127" style="left:962.50px;top:444.60px;font-size:8.60px;font-family:'Liberation Serif', serif;color:#222;-webkit-text-stroke:0.15px #222;">Feb 23, 2026</div>
<div class="t" id="t128" style="left:1042.40px;top:444.60px;font-size:8.60px;font-family:'Liberation Serif', serif;color:#222;-webkit-text-stroke:0.15px #222;">Deliver rebar</div>
<div class="t" id="t129" style="left:1042.40px;top:453.80px;font-size:8.60px;font-family:'Liberation Serif', serif;color:#222;-webkit-text-stroke:0.15px #222;">bundles and QA</div>
<div class="t" id="t130" style="left:1042.40px;top:463.00px;font-size:8.60px;font-family:'Liberation Serif', serif;color:#222;-webkit-text-stroke:0.15px #222;">certificates.</div>
<div class="t" id="t131" style="left:724.20px;top:473.30px;font-size:8.60px;font-family:'Liberation Serif', serif;color:#222;-webkit-text-stroke:0.15px #222;">Formwork</div>
<div class="t" id="t132" style="left:724.20px;top:482.50px;font-size:8.60px;font-family:'Liberation Serif', serif;color:#222;-webkit-text-stroke:0.15px #222;">installation (Span A)</div>
<div class="t" id="t133" style="left:803.40px;top:473.30px;font-size:8.60px;font-family:'Liberation Serif', serif;color:#222;-webkit-text-stroke:0.15px #222;">Feb 20, 2026</div>
<div class="t" id="t134" style="left:883.30px;top:473.30px;font-size:8.60px;font-family:'Liberation Serif', serif;color:#222;-webkit-text-stroke:0.15px #222;">Feb 20, 2026</div>
<div class="t" id="t135" style="left:962.50px;top:473.30px;font-size:8.60px;font-family:'Liberation Serif', serif;color:#222;-webkit-text-stroke:0.15px #222;">Feb 22, 2026</div>
<div class="t" id="t136" style="left:1042.40px;top:473.30px;font-size:8.60px;font-family:'Liberation Serif', serif;color:#222;-webkit-text-stroke:0.15px #222;">Install formwork</div>
<div class="t" id="t137" style="left:1042.40px;top:482.50px;font-size:8.60px;font-family:'Liberation Serif', serif;color:#222;-webkit-text-stroke:0.15px #222;">and conduct</div>
<div class="t" id="t138" style="left:1042.40px;top:491.70px;font-size:8.60px;font-family:'Liberation Serif', serif;color:#222;-webkit-text-stroke:0.15px #222;">inspection.</div>
<div class="t" id="t139" style="left:724.20px;top:501.60px;font-size:8.60px;font-family:'Liberation Serif', serif;color:#222;-webkit-text-stroke:0.15px #222;">Concrete pour</div>
<div class="t" id="t140" style="left:724.20px;top:510.80px;font-size:8.60px;font-family:'Liberation Serif', serif;color:#222;-webkit-text-stroke:0.15px #222;">(Span A)</div>
<div class="t" id="t141" style="left:803.40px;top:501.60px;font-size:8.60px;font-family:'Liberation Serif', serif;color:#222;-webkit-text-stroke:0.15px #222;">Feb 25, 2026</div>
<div class="t" id="t142" style="left:883.30px;top:501.60px;font-size:8.60px;font-family:'Liberation Serif', serif;color:#222;-webkit-text-stroke:0.15px #222;">Feb 25, 2026</div>
<div class="t" id="t143" style="left:962.50px;top:501.60px;font-size:8.60px;font-family:'Liberation Serif', serif;color:#222;-webkit-text-stroke:0.15px #222;">Feb 28, 2026</div>
<div class="t" id="t144" style="left:1042.40px;top:501.60px;font-size:8.60px;font-family:'Liberation Serif', serif;color:#222;-webkit-text-stroke:0.15px #222;">Pour concrete</div>
<div class="t" id="t145" style="left:1042.40px;top:510.80px;font-size:8.60px;font-family:'Liberation Serif', serif;color:#222;-webkit-text-stroke:0.15px #222;">during approved</div>
<div class="t" id="t146" style="left:1042.40px;top:520.00px;font-size:8.60px;font-family:'Liberation Serif', serif;color:#222;-webkit-text-stroke:0.15px #222;">night closure.</div>
<div class="t" id="t147" style="left:720.00px;top:553.53px;font-size:10.00px;font-family:'Liberation Sans', sans-serif;color:#2f5597;font-weight:700;transform:scaleX(0.9833);-webkit-text-stroke:0.2px #2f5597;">4. Budget</div>
<div class="t" id="t148" style="left:720.00px;top:568.05px;font-size:8.90px;font-family:'Liberation Serif', serif;color:#2f4676;-webkit-text-stroke:0.15px #2f4676;transform:scaleX(1.0087);">Delete this section if the project is executed fully within existing operational resources.</div>
<div class="r" style="left:719.20px;top:586.30px;width:397.50px;height:9.70px;background:#ffc000;"></div>
<div class="r" style="left:718.70px;top:585.80px;width:398.50px;height:1.00px;background:#000;"></div>
<div class="r" style="left:718.70px;top:595.50px;width:398.50px;height:1.00px;background:#000;"></div>
<div class="r" style="left:718.70px;top:605.60px;width:398.50px;height:1.00px;background:#000;"></div>
<div class="r" style="left:718.70px;top:624.50px;width:398.50px;height:1.00px;background:#000;"></div>
<div class="r" style="left:718.70px;top:643.70px;width:398.50px;height:1.00px;background:#000;"></div>
<div class="r" style="left:718.70px;top:652.80px;width:398.50px;height:1.00px;background:#000;"></div>
<div class="r" style="left:718.70px;top:585.80px;width:1.00px;height:68.00px;background:#000;"></div>
<div class="r" style="left:850.90px;top:585.80px;width:1.00px;height:68.00px;background:#000;"></div>
<div class="r" style="left:984.40px;top:585.80px;width:1.00px;height:68.00px;background:#000;"></div>
<div class="r" style="left:1116.20px;top:585.80px;width:1.00px;height:68.00px;background:#000;"></div>
<div class="t" id="t149" style="left:724.20px;top:585.50px;font-size:8.60px;font-family:'Liberation Serif', serif;color:#fff;font-weight:700;">Budget Item</div>
<div class="t" id="t150" style="left:856.40px;top:585.50px;font-size:8.60px;font-family:'Liberation Serif', serif;color:#fff;font-weight:700;">Amount ($)</div>
<div class="t" id="t151" style="left:989.90px;top:585.50px;font-size:8.60px;font-family:'Liberation Serif', serif;color:#fff;font-weight:700;">Notes</div>
<div class="t" id="t152" style="left:724.20px;top:596.10px;font-size:8.60px;font-family:'Liberation Serif', serif;color:#222;-webkit-text-stroke:0.15px #222;">Total Project Funding</div>
<div class="t" id="t153" style="left:856.40px;top:596.10px;font-size:8.60px;font-family:'Liberation Serif', serif;color:#000;font-weight:700;">[12,500,000]</div>
<div class="t" id="t154" style="left:989.90px;top:596.10px;font-size:8.60px;font-family:'Liberation Serif', serif;color:#222;-webkit-text-stroke:0.15px #222;">Approved baseline budget.</div>
<div class="t" id="t155" style="left:724.20px;top:606.20px;font-size:8.60px;font-family:'Liberation Serif', serif;color:#222;-webkit-text-stroke:0.15px #222;">Planned Spend (this period)</div>
<div class="t" id="t156" style="left:856.40px;top:606.20px;font-size:8.60px;font-family:'Liberation Serif', serif;color:#000;font-weight:700;">[850,000]</div>
<div class="t" id="t157" style="left:989.90px;top:606.20px;font-size:8.60px;font-family:'Liberation Serif', serif;color:#222;-webkit-text-stroke:0.15px #222;">Planned work: demolition +</div>
<div class="t" id="t158" style="left:989.90px;top:615.90px;font-size:8.60px;font-family:'Liberation Serif', serif;color:#222;-webkit-text-stroke:0.15px #222;">procurement.</div>
<div class="t" id="t159" style="left:724.20px;top:625.10px;font-size:8.60px;font-family:'Liberation Serif', serif;color:#222;-webkit-text-stroke:0.15px #222;">Actual Spend (this period)</div>
<div class="t" id="t160" style="left:856.40px;top:625.10px;font-size:8.60px;font-family:'Liberation Serif', serif;color:#000;font-weight:700;">[910,000]</div>
<div class="t" id="t161" style="left:989.90px;top:625.10px;font-size:8.60px;font-family:'Liberation Serif', serif;color:#222;-webkit-text-stroke:0.15px #222;">Higher overtime due to weather</div>
<div class="t" id="t162" style="left:989.90px;top:634.80px;font-size:8.60px;font-family:'Liberation Serif', serif;color:#222;-webkit-text-stroke:0.15px #222;">window.</div>
<div class="t" id="t163" style="left:724.20px;top:644.30px;font-size:8.60px;font-family:'Liberation Serif', serif;color:#222;-webkit-text-stroke:0.15px #222;">Remaining Budget (life of project)</div>
<div class="t" id="t164" style="left:856.40px;top:644.30px;font-size:8.60px;font-family:'Liberation Serif', serif;color:#000;font-weight:700;">[8,940,000]</div>
<div class="t" id="t165" style="left:989.90px;top:644.30px;font-size:8.60px;font-family:'Liberation Serif', serif;color:#222;-webkit-text-stroke:0.15px #222;">Forecast subject to supplier pricing.</div>
<div class="t" id="t166" style="left:720.00px;top:654.71px;font-size:9.30px;font-family:'Liberation Serif', serif;color:#000;-webkit-text-stroke:0.15px #000;transform:scaleX(1.0305);">Comments: Explain reasons for variance (overspend/underspend) and anticipated year-to-date</div>
<div class="t" id="t167" style="left:720.00px;top:666.81px;font-size:9.30px;font-family:'Liberation Serif', serif;color:#000;-webkit-text-stroke:0.15px #000;transform:scaleX(1.0299);">expenditure.</div>
<div class="t" id="t168" style="left:720.00px;top:700.53px;font-size:10.00px;font-family:'Liberation Sans', sans-serif;color:#2f5597;font-weight:700;transform:scaleX(0.9948);-webkit-text-stroke:0.2px #2f5597;">5. Project Risk Management Statement</div>
<div class="t" id="t169" style="left:720.00px;top:715.15px;font-size:8.90px;font-family:'Liberation Serif', serif;color:#2f4676;-webkit-text-stroke:0.15px #2f4676;transform:scaleX(1.0097);">Use this section for recording and monitoring risks when a separate Risk Register is not available.</div>
<div class="r" style="left:719.20px;top:733.50px;width:397.50px;height:11.50px;background:#c00000;"></div>
<div class="r" style="left:718.70px;top:733.00px;width:398.50px;height:1.00px;background:#000;"></div>
<div class="r" style="left:718.70px;top:733.00px;width:1.00px;height:12.00px;background:#000;"></div>
<div class="r" style="left:797.90px;top:733.00px;width:1.00px;height:12.00px;background:#000;"></div>
<div class="r" style="left:877.80px;top:733.00px;width:1.00px;height:12.00px;background:#000;"></div>
<div class="r" style="left:957.00px;top:733.00px;width:1.00px;height:12.00px;background:#000;"></div>
<div class="r" style="left:1036.90px;top:733.00px;width:1.00px;height:12.00px;background:#000;"></div>
<div class="r" style="left:1116.20px;top:733.00px;width:1.00px;height:12.00px;background:#000;"></div>
<div class="t" id="t170" style="left:724.20px;top:738.60px;font-size:8.60px;font-family:'Liberation Serif', serif;color:#fff;font-weight:700;">Risk</div>
<div class="t" id="t171" style="left:803.40px;top:738.60px;font-size:8.60px;font-family:'Liberation Serif', serif;color:#fff;font-weight:700;">Likelihood</div>
<div class="t" id="t172" style="left:883.30px;top:738.60px;font-size:8.60px;font-family:'Liberation Serif', serif;color:#fff;font-weight:700;">Seriousness</div>
<div class="t" id="t173" style="left:962.50px;top:738.60px;font-size:8.60px;font-family:'Liberation Serif', serif;color:#fff;font-weight:700;">Grade</div>
<div class="t" id="t174" style="left:1042.40px;top:733.40px;font-size:8.60px;font-family:'Liberation Serif', serif;color:#fff;font-weight:700;">Mitigation</div>
<div class="r" style="left:0.00px;top:745.00px;width:1366.00px;height:21.00px;background:#f3f3f3;"></div>
<div class="r" style="left:0.00px;top:745.00px;width:1366.00px;height:1.00px;background:#d4d4d4;"></div>
<div class="r" style="left:0.00px;top:766.00px;width:1366.00px;height:2.00px;background:#3a3a3a;"></div>
<div class="r" style="left:48.00px;top:766.00px;width:288.00px;height:2.00px;background:#d8d8d8;"></div>
<div class="t" id="t175" style="left:11.70px;top:750.54px;font-size:12.00px;font-family:'Liberation Sans', sans-serif;color:#262626;transform:scaleX(0.9358);">&quot;Project Status Report Template.docx&quot;: 4,109 characters (an approximate value).</div>
<svg class="r" style="left:1083.00px;top:748.00px;" width="17" height="16" viewBox="0 0 17 16"><path d="M1.5 1.5 H8.5 V13.5 H1.5 Z M8.5 1.5 H15.5 V13.5 H8.5 Z" fill="#fff" stroke="#555" stroke-width="1"/><path d="M3 4 H7 M3 6.5 H7 M3 9 H7 M3 11.5 H7 M10 4 H14 M10 6.5 H14 M10 9 H14 M10 11.5 H14" stroke="#666" stroke-width="0.9"/><path d="M8.5 13.5 V15.5" stroke="#555" stroke-width="1"/></svg>
<div class="r" style="left:1112.00px;top:745.50px;width:40.00px;height:20.50px;background:#c8c8c8;"></div>
<svg class="r" style="left:1124.00px;top:748.00px;" width="16" height="15" viewBox="0 0 16 15"><rect x="1.5" y="1.5" width="13" height="12.5" fill="none" stroke="#555" stroke-width="1"/><path d="M3.5 4 H12.5 M3.5 6.5 H12.5 M3.5 9 H12.5 M3.5 11.5 H12.5" stroke="#555" stroke-width="1"/></svg>
<svg class="r" style="left:1164.00px;top:748.00px;" width="17" height="15" viewBox="0 0 17 15"><path d="M1.5 1.5 H10 L12 3.5 V7 M1.5 1.5 V13.5 H7" fill="none" stroke="#555" stroke-width="1"/><path d="M3.5 5 H9 M3.5 7.5 H8 M3.5 10 H6" stroke="#555" stroke-width="1"/><circle cx="11.5" cy="11" r="3.8" fill="#777"/><path d="M9 10 Q11 9 12 11 Q13 13 14.5 11.5" fill="none" stroke="#fff" stroke-width="0.8"/></svg>
<div class="r" style="left:1198.00px;top:755.00px;width:8.00px;height:1.20px;background:#444;"></div>
<div class="r" style="left:1211.00px;top:755.30px;width:100.00px;height:1.00px;background:#555;"></div>
<div class="r" style="left:1238.00px;top:751.00px;width:5.00px;height:11.00px;background:#444;"></div>
<div class="r" style="left:1260.50px;top:752.50px;width:1.00px;height:6.00px;background:#444;"></div>
<div class="r" style="left:1316.00px;top:755.00px;width:8.00px;height:1.20px;background:#444;"></div>
<div class="r" style="left:1319.40px;top:751.50px;width:1.20px;height:8.00px;background:#444;"></div>
<div class="t" id="t176" style="left:1337.00px;top:749.64px;font-size:12.00px;font-family:'Liberation Sans', sans-serif;color:#262626;transform:scaleX(0.8655);">60%</div>
</body></html>
